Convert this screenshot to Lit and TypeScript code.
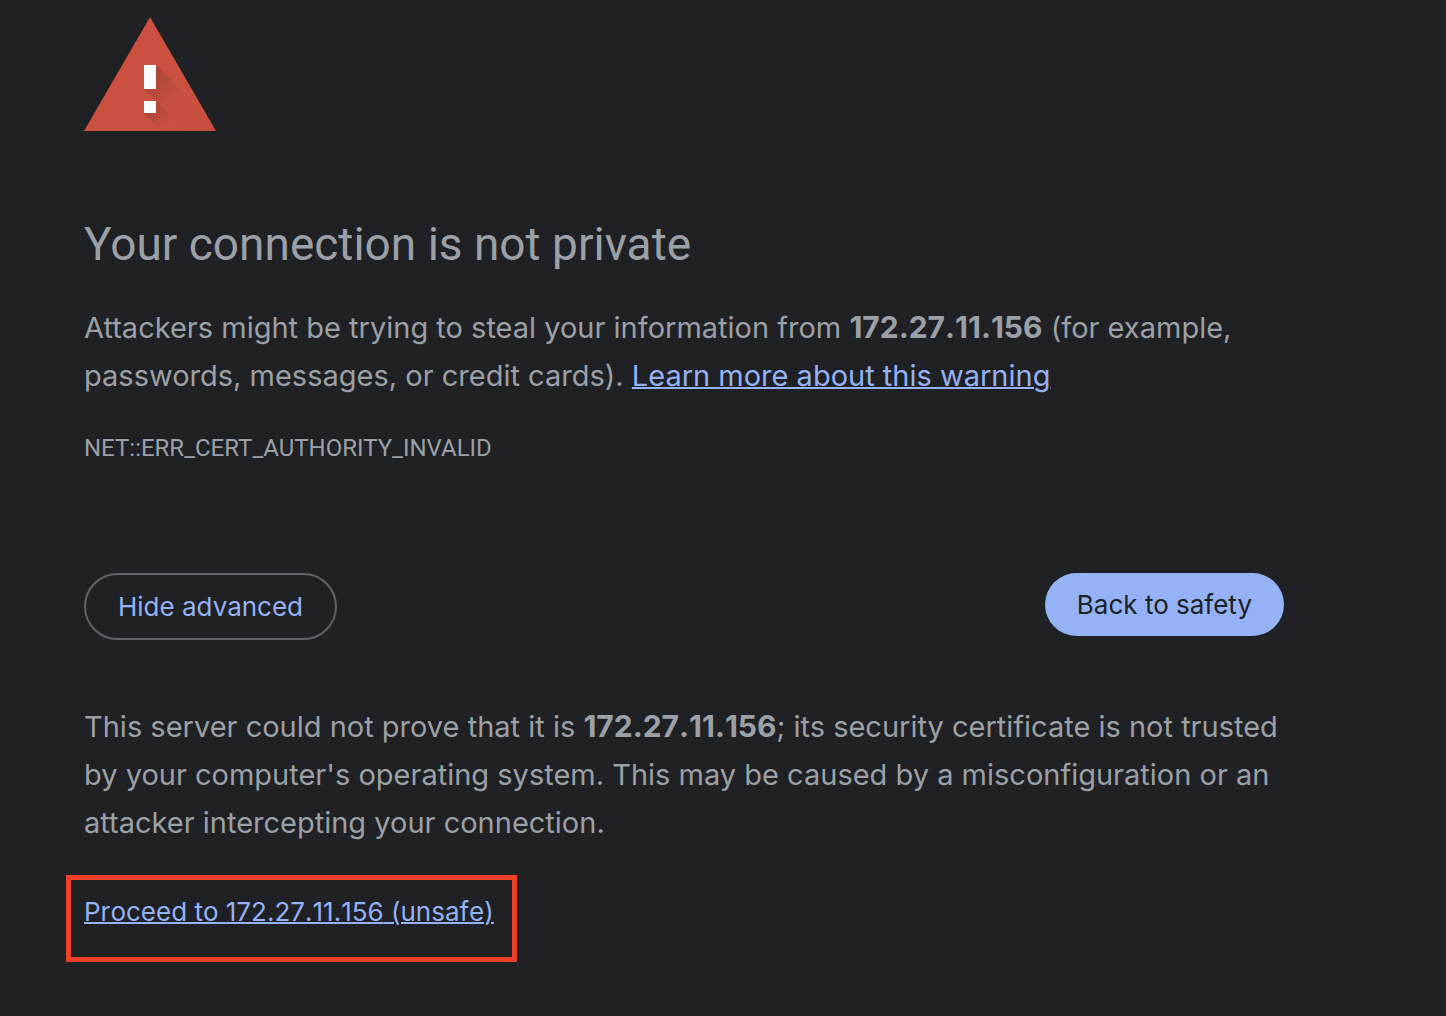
import { LitElement, html, css } from "lit";
import { customElement, property, state } from "lit/decorators.js";

@customElement("app-root")
export class AppRoot extends LitElement {
  @property() host = "172.27.11.156";
  @state() private advanced = true;

  static styles = css`
    :host {
      display: block;
      min-height: 100vh;
      box-sizing: border-box;
      background: #202124;
      color: #9aa0a6;
      font-family: Inter, "Liberation Sans", sans-serif;
      font-size: 29px;
      line-height: 48px;
    }
    .page {
      max-width: 1200px;
      padding: 16px 84px 54px;
    }
    .icon {
      display: block;
      width: 132px;
      height: 116px;
    }
    h1 {
      margin: 82px 0 30px;
      font-family: Roboto, "Liberation Sans", sans-serif;
      font-size: 46px;
      font-weight: 400;
      line-height: 60px;
    }
    p {
      margin: 0;
    }
    strong,
    .proceed {
      font-kerning: none;
      font-feature-settings: "calt" 0;
    }
    strong {
      font-size: 30px;
      line-height: 1;
    }
    a {
      color: #94b2f5;
      text-decoration-thickness: 2px;
    }
    .code {
      margin-top: 30px;
      font-family: Roboto, "Liberation Sans", sans-serif;
      font-size: 24px;
      line-height: 36px;
    }
    .actions {
      display: flex;
      justify-content: space-between;
      align-items: flex-start;
      margin-top: 107px;
    }
    button {
      box-sizing: border-box;
      border: 0;
      border-radius: 34px;
      padding: 0 32px;
      font: inherit;
      font-size: 26px;
      line-height: 63px;
    }
    .primary {
      background: #94b2f5;
      color: #202124;
    }
    .secondary {
      border: 2px solid #5f6368;
      background: transparent;
      color: #94b2f5;
    }
    .details {
      margin-top: 63px;
    }
    .proceed {
      width: fit-content;
      margin: 28px 0 0 -18px;
      padding: 9px 18px 23px 13px;
      border: 5px solid #ee3f27;
      font-size: 26px;
      line-height: 45px;
    }
  `;

  render() {
    return html`
      <main class="page">
        <svg class="icon" viewBox="0 0 132 116" aria-hidden="true">
          <defs>
            <linearGradient
              id="bar"
              gradientUnits="userSpaceOnUse"
              x1="66"
              y1="61"
              x2="87"
              y2="82"
            >
              <stop offset="0" stop-color="#3e2723" stop-opacity="0.24" />
              <stop offset="1" stop-color="#3e2723" stop-opacity="0.04" />
            </linearGradient>
            <linearGradient
              id="dot"
              gradientUnits="userSpaceOnUse"
              x1="66"
              y1="91"
              x2="82"
              y2="107"
            >
              <stop offset="0" stop-color="#3e2723" stop-opacity="0.26" />
              <stop offset="1" stop-color="#3e2723" stop-opacity="0.02" />
            </linearGradient>
            <clipPath id="triangle"><path d="M66 1L132 115H0Z" /></clipPath>
          </defs>
          <path d="M66 1L132 115H0Z" fill="#cc5040" />
          <g clip-path="url(#triangle)">
            <path d="M72 49L138 115H102L60 73Z" fill="url(#bar)" />
            <path d="M72 85L102 115H78L60 97Z" fill="url(#dot)" />
          </g>
          <path d="M60 49H72V73H60ZM60 85H72V97H60Z" fill="#fff" />
        </svg>
        <h1>Your connection is not private</h1>
        <p>
          Attackers might be trying to steal your information from
          <strong>${this.host}</strong> (for example, passwords, messages, or
          credit cards). <a href="#learn-more">Learn more about this warning</a>
        </p>
        <p class="code">NET::ERR_CERT_AUTHORITY_INVALID</p>
        <div class="actions">
          <button
            class="secondary"
            type="button"
            aria-expanded=${this.advanced}
            @click=${() => (this.advanced = !this.advanced)}
          >
            ${this.advanced ? "Hide advanced" : "Advanced"}
          </button>
          <button class="primary" type="button">Back to safety</button>
        </div>
        ${this.advanced
          ? html`<section class="details">
              <p>
                This server could not prove that it is
                <strong>${this.host}</strong>; its security certificate is not
                trusted by your computer's operating system. This may be caused
                by a misconfiguration or an attacker intercepting your
                connection.
              </p>
              <p class="proceed">
                <a href="#proceed">Proceed to ${this.host} (unsafe)</a>
              </p>
            </section>`
          : null}
      </main>
    `;
  }
}
